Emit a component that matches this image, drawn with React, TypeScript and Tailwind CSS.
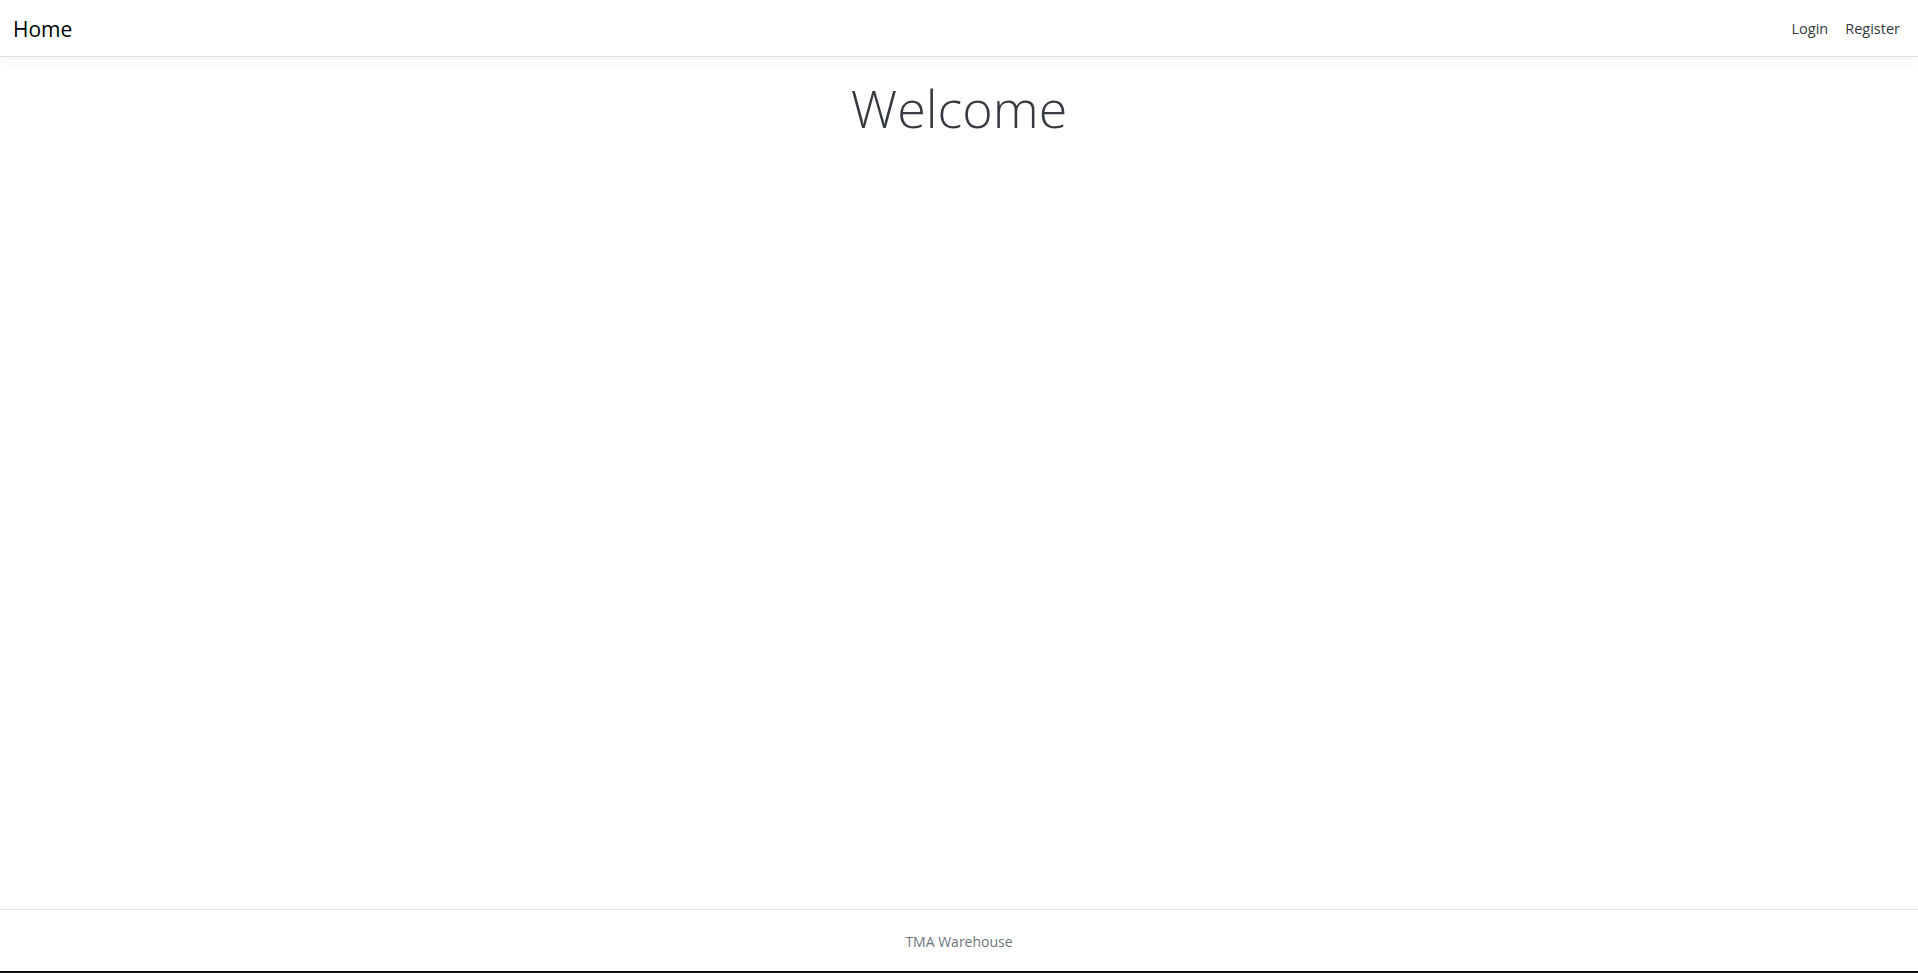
export default function App() {
  return (
    <div
      className="flex h-screen flex-col bg-white text-[#212529]"
      style={{ fontFamily: '"Open Sans", "Noto Sans", sans-serif' }}
    >
      {/* Navbar */}
      <header className="relative z-10 flex h-[57px] shrink-0 items-center justify-between border-b border-[#dee2e6] bg-white px-[13px] pt-[2px] shadow-[0_4px_12px_rgba(0,0,0,0.05)]">
        <a className="text-[21px] leading-none text-black">Home</a>
        <nav className="flex items-center gap-[17px] pr-[5px] text-[14.5px] text-[#343a40]">
          <a>Login</a>
          <a>Register</a>
        </nav>
      </header>

      {/* Main */}
      <main className="flex-1">
        <div className="pt-[20px] text-center">
          <h1 className="text-[52px] font-light leading-[1.2] text-[#343a40]">Welcome</h1>
        </div>
      </main>

      {/* Footer */}
      <footer className="flex h-[62px] shrink-0 items-center justify-center border-t border-[#dee2e6] pt-[1px] text-[14px] text-[#6c757d]">
        TMA Warehouse
      </footer>
      <div className="h-[2px] shrink-0 bg-[#111]" />
    </div>
  )
}
